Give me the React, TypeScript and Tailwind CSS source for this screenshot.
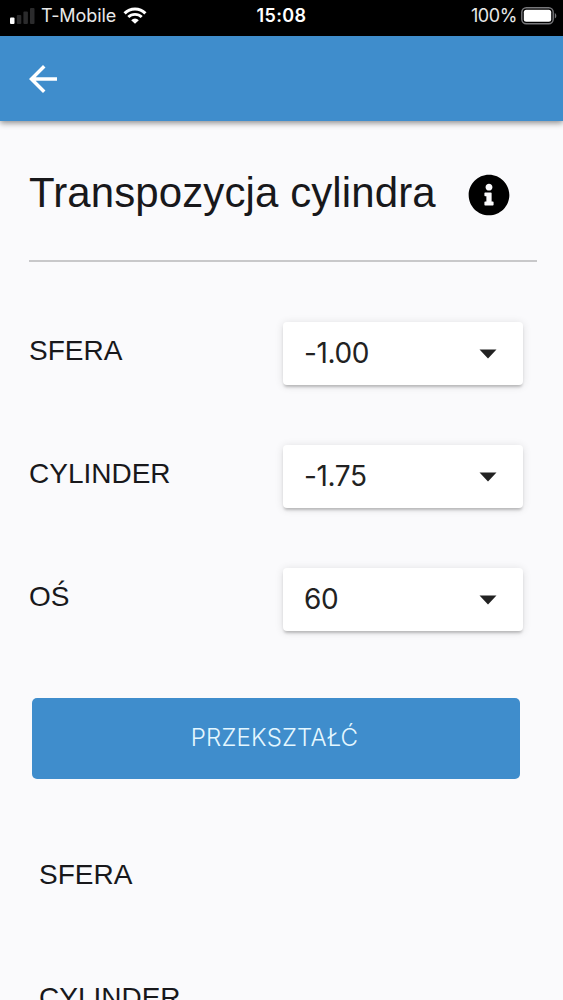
import { FaInfoCircle } from 'react-icons/fa';
import { MdArrowBack } from 'react-icons/md';

const fields = [
  { label: 'SFERA', value: '-1.00' },
  { label: 'CYLINDER', value: '-1.75' },
  { label: 'OŚ', value: '60' },
];

const results = ['SFERA', 'CYLINDER'];

const StatusBar = () => {
  return (
    <div className="grid h-9 shrink-0 grid-cols-3 items-center bg-black pr-1.5 pb-[5px] pl-2.5 font-['Inter',sans-serif] text-white">
      <div className="flex items-center">
        <svg width="25" height="16" viewBox="0 0 25 16" className="shrink-0">
          <rect x="0" y="9.5" width="4.5" height="6.5" rx="1" fill="#fff" />
          <rect x="6.8" y="7" width="4.5" height="9" rx="1" fill="#2b2b2c" />
          <rect x="13.4" y="3.5" width="4.5" height="12.5" rx="1" fill="#2b2b2c" />
          <rect x="20" y="0" width="4.5" height="16" rx="1" fill="#2b2b2c" />
        </svg>
        <span className="ml-1.5 text-[18px] tracking-[-0.1px] whitespace-nowrap text-[#e8e8e8]">T-Mobile</span>
        <svg width="24" height="17" viewBox="0 0 24 17" className="ml-[7px] shrink-0">
          <path d="M1.600 6.300a14.600 14.600 0 0 1 20.800 0" fill="none" stroke="#fff" strokeWidth="3.100" />
          <path d="M5.300 10.100a9.400 9.400 0 0 1 13.400 0" fill="none" stroke="#fff" strokeWidth="2.800" />
          <path d="M12 16.800 8.200 13.200a5.300 5.300 0 0 1 7.600 0z" fill="#fff" />
        </svg>
      </div>
      <span className="text-center text-[18px] font-semibold tracking-[0.4px]">
        <span className="mr-1">15:08</span>
      </span>
      <div className="flex items-center justify-end">
        <span className="text-[18px] tracking-[-0.4px] text-[#e8e8e8]">100%</span>
        <svg width="36" height="18" viewBox="0 0 36 18" className="ml-1 shrink-0">
          <rect x="0.8" y="0.8" width="31.4" height="16" rx="4.5" fill="none" stroke="#77777a" strokeWidth="1.4" />
          <rect x="2.8" y="2.8" width="27.4" height="12" rx="2.5" fill="#fff" />
          <path d="M33.8 6v5.6c2-1 2-4.600 0-5.600z" fill="#77777a" />
        </svg>
      </div>
    </div>
  );
};

const SelectBox = ({ value }: { value: string }) => {
  return (
    <button className="flex h-[63px] w-60 items-center justify-between rounded-[4px] bg-white pr-[26px] pl-[21px] font-['Inter',sans-serif] text-[28px] text-[#222] shadow-[0_3px_3px_-1px_rgba(0,0,0,0.22),0_1px_8px_rgba(0,0,0,0.12)]">
      <span className="pb-0.5 tracking-[-0.4px]">{value}</span>
      <svg width="18" height="10" viewBox="0 0 18 10">
        <path d="M0.500 0.500h17L9 9.500z" fill="#222" />
      </svg>
    </button>
  );
};

const App = () => {
  return (
    <div className="flex h-[1000px] w-full flex-col overflow-hidden bg-[#fafafc] font-['Liberation_Sans',sans-serif] text-[#18181b]">
      <StatusBar />

      <header className="flex h-[85px] shrink-0 items-center bg-[#3f8dcc] pl-[22px] shadow-[0_2px_6px_rgba(0,0,0,0.45)]">
        <button aria-label="Wstecz">
          <MdArrowBack size={42} className="text-white" />
        </button>
      </header>

      <main className="flex flex-col pr-[26px] pl-[29px]">
        <div className="flex h-[141px] items-center border-b-2 border-[#c8c8ca]">
          <h1 className="pt-1 text-[42px] leading-none tracking-[0.1px]">Transpozycja cylindra</h1>
          <FaInfoCircle size={42} className="mt-2 ml-8 text-black" />
        </div>

        <div className="mt-[60px] flex flex-col gap-[60px] pr-[14px]">
          {fields.map((field) => (
            <div key={field.label} className="flex items-center justify-between">
              <span className="pb-[5px] text-[28px] leading-none">{field.label}</span>
              <SelectBox value={field.value} />
            </div>
          ))}
        </div>

        <button className="mt-[67px] mr-[17px] ml-[3px] h-[81px] rounded-[5px] bg-[#3f8dcc] pr-[3px] pb-0.5 font-['Inter',sans-serif] text-2xl font-light tracking-[0.2px] text-[#e4f7ff]">
          PRZEKSZTAŁĆ
        </button>

        <div className="mt-[82px] flex flex-col gap-[95px] pl-[10px] text-[28px] leading-none">
          {results.map((label) => (
            <span key={label}>{label}</span>
          ))}
        </div>
      </main>
    </div>
  );
};

export default App;
